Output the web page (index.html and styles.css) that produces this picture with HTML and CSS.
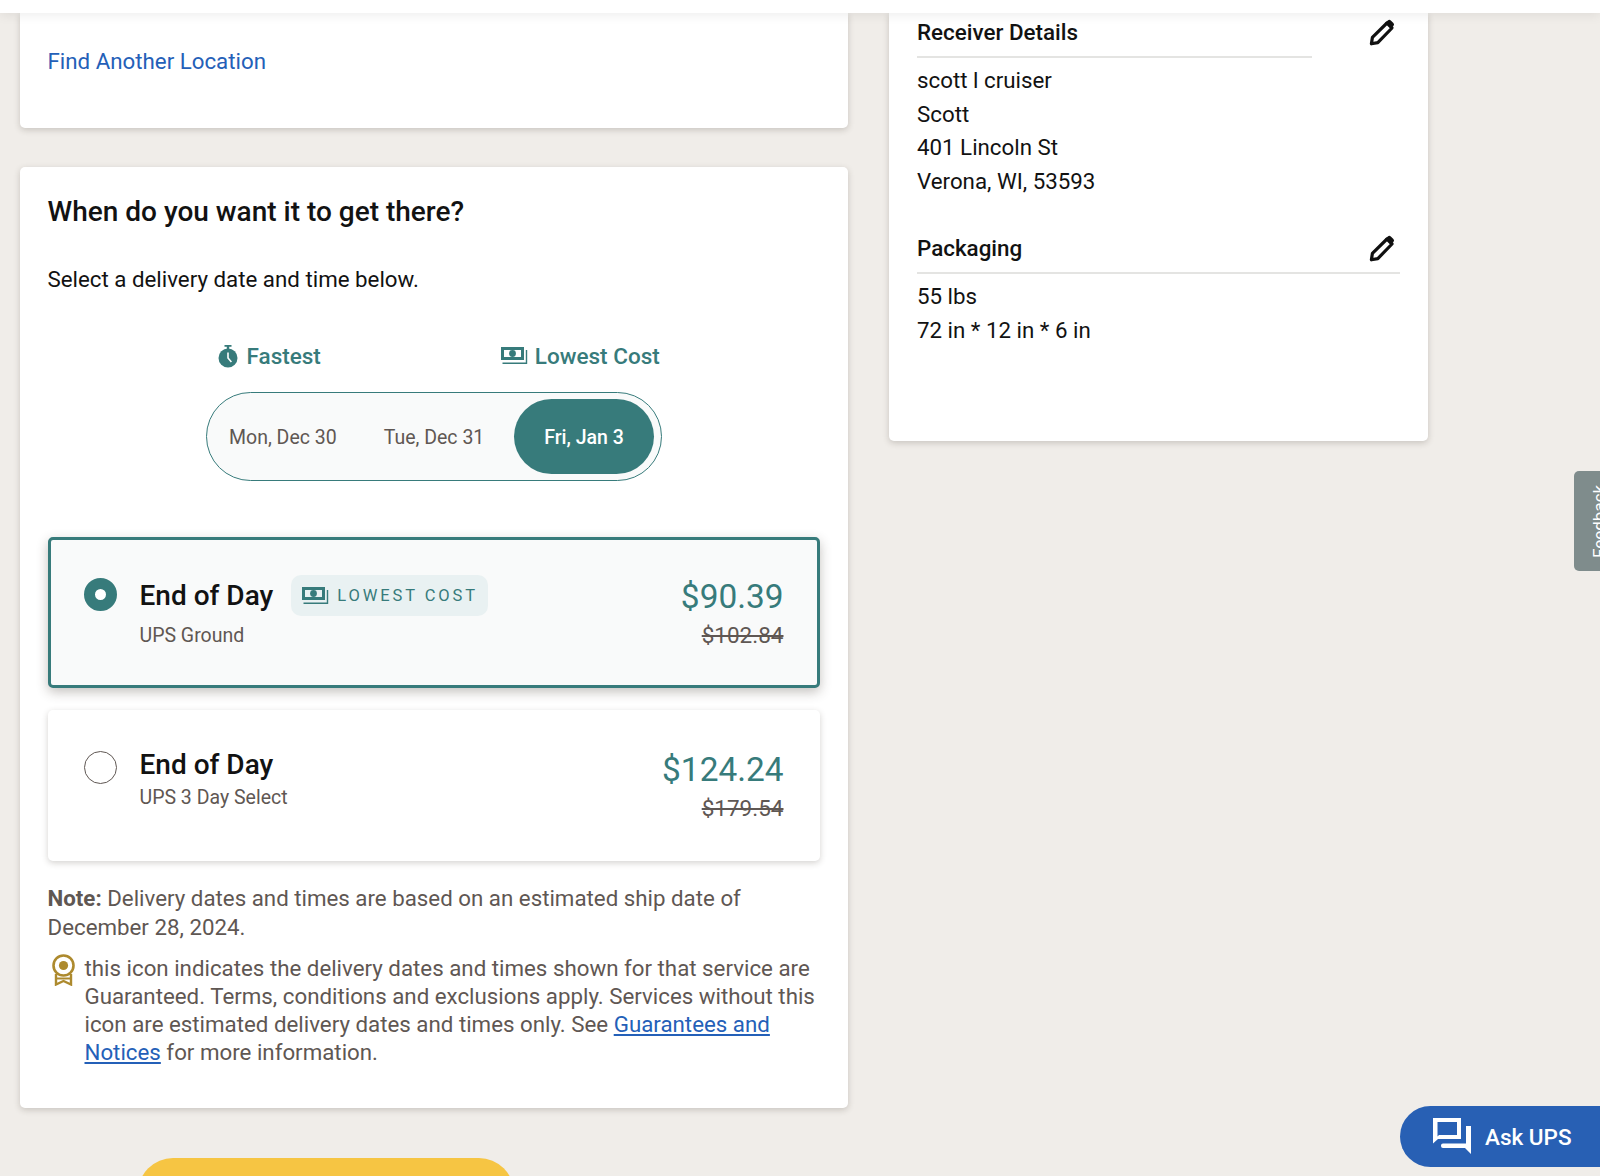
FILE: index.html
```html
<!DOCTYPE html>
<html lang="en">
<head>
<meta charset="utf-8">
<title>Ship</title>
<link rel="stylesheet" href="styles.css">
</head>
<body>
<header class="topbar"></header>
<main class="layout">
  <div class="col-main">
    <section class="card card-location">
      <a class="link-plain" href="#">Find Another Location</a>
    </section>
    <section class="card card-delivery">
      <h2 class="title">When do you want it to get there?</h2>
      <p class="lead">Select a delivery date and time below.</p>
      <div class="hints">
        <span class="hint hint-fast">
          <svg class="ico-watch" viewBox="0 0 20 24"><path d="M6.5 1h7v1.8h-2.3v2.4h-2.4V2.8H6.5z" fill="currentColor"/><circle cx="10" cy="14" r="9.5" fill="currentColor"/><path d="M10 8.5V14l3.4 4" fill="none" stroke="#fff" stroke-width="1.6"/></svg>
          Fastest
        </span>
        <span class="hint hint-low">
          <svg class="ico-money" viewBox="0 0 27 18"><path fill-rule="evenodd" d="M0 0h23v13H0zM3 3v7h17V3z" fill="currentColor"/><circle cx="11.5" cy="6.5" r="3.4" fill="currentColor"/><path d="M1.5 16.3h24V3" fill="none" stroke="currentColor" stroke-width="1.4"/></svg>
          Lowest Cost
        </span>
      </div>
      <div class="segment">
        <span class="seg seg-mon">Mon, Dec 30</span>
        <span class="seg seg-tue">Tue, Dec 31</span>
        <span class="seg seg-active">Fri, Jan 3</span>
      </div>
      <div class="option option-selected">
        <span class="radio radio-on"></span>
        <div class="opt-body">
          <div class="opt-head">
            <span class="opt-title">End of Day</span>
            <span class="badge">
              <svg class="ico-money-sm" viewBox="0 0 27 18"><path fill-rule="evenodd" d="M0 0h23v13H0zM3 3v7h17V3z" fill="currentColor"/><circle cx="11.5" cy="6.5" r="3.4" fill="currentColor"/><path d="M1.5 16.3h24V3" fill="none" stroke="currentColor" stroke-width="1.4"/></svg>
              LOWEST COST
            </span>
          </div>
          <div class="opt-sub opt-sub-wide">UPS Ground</div>
        </div>
        <div class="opt-price">
          <div class="price">$90.39</div>
          <div class="was">$102.84</div>
        </div>
      </div>
      <div class="option">
        <span class="radio"></span>
        <div class="opt-body">
          <div class="opt-head">
            <span class="opt-title">End of Day</span>
          </div>
          <div class="opt-sub">UPS 3 Day Select</div>
        </div>
        <div class="opt-price">
          <div class="price">$124.24</div>
          <div class="was">$179.54</div>
        </div>
      </div>
      <p class="note"><strong>Note:</strong> Delivery dates and times are based on an estimated ship date of December 28, 2024.</p>
      <div class="guarantee">
        <svg class="ico-medal" viewBox="0 0 24 32"><circle cx="12" cy="11.5" r="10" fill="none" stroke="#ad8a2e" stroke-width="2.6"/><circle cx="12" cy="11.5" r="4.6" fill="#ad8a2e"/><path d="M4.5 20v10.5L12 27l7.5 3.5V20" fill="none" stroke="#ad8a2e" stroke-width="2.4"/><path d="M5 24.5h14" stroke="#ad8a2e" stroke-width="2"/></svg>
        <p class="guarantee-text">this icon indicates the delivery dates and times shown for that service are Guaranteed. Terms, conditions and exclusions apply. Services without this icon are estimated delivery dates and times only. See <a class="link" href="#">Guarantees and Notices</a> for more information.</p>
      </div>
    </section>
    <button class="cta" type="button"></button>
  </div>
  <aside class="col-side">
    <section class="card card-summary">
      <div class="sum-head sum-head-first">
        <h3 class="sum-title sum-title-short">Receiver Details</h3>
        <svg class="ico-pencil" viewBox="0 0 26 27"><path d="M2.4 24.8l1-6.4L18 4l5 5L8.8 23.6z" fill="none" stroke="#111" stroke-width="3.2" stroke-linejoin="round"/><path d="M16.2 3.8l2.6-2.4a2.2 2.2 0 0 1 3 0l2.6 2.6a2.2 2.2 0 0 1 0 3l-2.4 2.6z" fill="#111"/></svg>
      </div>
      <div class="sum-lines">scott l cruiser<br>Scott<br>401 Lincoln St<br>Verona, WI, 53593</div>
      <div class="sum-head sum-head-line">
        <h3 class="sum-title">Packaging</h3>
        <svg class="ico-pencil" viewBox="0 0 26 27"><path d="M2.4 24.8l1-6.4L18 4l5 5L8.8 23.6z" fill="none" stroke="#111" stroke-width="3.2" stroke-linejoin="round"/><path d="M16.2 3.8l2.6-2.4a2.2 2.2 0 0 1 3 0l2.6 2.6a2.2 2.2 0 0 1 0 3l-2.4 2.6z" fill="#111"/></svg>
      </div>
      <div class="sum-lines sum-lines-last">55 lbs<br>72 in * 12 in * 6 in</div>
    </section>
  </aside>
</main>
<div class="feedback"><span class="feedback-text">Feedback</span></div>
<button class="ask" type="button">
  <svg class="ico-chat" viewBox="0 0 40 39"><path fill-rule="evenodd" d="M1 1h28v21H6l-5 4.5zM5.5 5v14.5L7 18h18V5z" fill="#fff"/><path d="M34 9h5v28l-6-6H11a2 2 0 0 1-2-2v-.5a2 2 0 0 1 2-2h23z" fill="#fff"/></svg>
  Ask UPS
</button>
</body>
</html>
```
FILE: styles.css
```css
* { box-sizing: border-box; }
html, body { margin: 0; height: 100%; }
body {
  height: 1176px;
  overflow: hidden;
  background: #f0ede9;
  font-family: Roboto, "Liberation Sans", sans-serif;
  font-size: 22.3px;
  color: #121212;
}
.topbar {
  position: relative;
  z-index: 5;
  height: 13px;
  background: #fff;
  box-shadow: 0 2px 12px rgba(0, 0, 0, .08);
}
.layout {
  display: grid;
  grid-template-columns: 828px 539px;
  column-gap: 41.5px;
  padding-left: 19.5px;
  align-items: start;
}
.card {
  background: #fff;
  border-radius: 5px;
  box-shadow: 0 2px 6px rgba(60, 50, 40, .22);
}
.card-location {
  height: 115px;
  padding: 33px 28px 0;
  border-radius: 0 0 5px 5px;
}
.link-plain { display: block; line-height: 30px; color: #2460b8; text-decoration: none; }
.card-delivery { margin-top: 39px; padding: 27px 28px 42px; }
.title { margin: 0; font-size: 28px; line-height: 36px; font-weight: 500; }
.lead { margin: 34px 0 0; line-height: 30px; }
.hints {
  display: flex;
  margin-top: 47px;
  height: 30px;
  color: #377b7b;
  font-weight: 500;
  font-size: 22.5px;
  line-height: 30px;
}
.hint { display: flex; align-items: center; }
.hint-fast { margin-left: 170px; gap: 9px; }
.hint-low { margin-left: 180px; gap: 7px; }
.ico-watch { width: 20px; height: 24px; }
.ico-money { width: 27px; height: 18px; }
.segment {
  display: flex;
  align-items: center;
  width: 456px;
  height: 89px;
  margin: 21px 0 0 158.5px;
  padding: 0 7px 0 22px;
  border: 1.5px solid #377b7b;
  border-radius: 45px;
  background: #f9fafa;
  font-size: 19.5px;
  color: #5f5753;
}
.seg { line-height: 28px; padding-top: 2px; }
.seg-tue { margin-left: 47px; }
.seg-active {
  display: flex;
  align-items: center;
  justify-content: center;
  width: 140px;
  height: 75px;
  margin-left: auto;
  border-radius: 38px;
  background: #377b7b;
  color: #fff;
  font-weight: 500;
}
.option {
  display: flex;
  align-items: flex-start;
  height: 151px;
  margin-top: 22px;
  padding: 35px 33px;
  border: 3px solid transparent;
  border-radius: 5px;
  background: #fff;
  box-shadow: 0 2px 6px rgba(60, 50, 40, .22);
}
.option-selected {
  margin-top: 56px;
  border-color: #377b7b;
  background: #f9fafa;
  box-shadow: 0 4px 12px rgba(60, 50, 40, .3);
}
.radio {
  flex: none;
  width: 33px;
  height: 33px;
  margin-top: 3px;
  border: 1.5px solid #5f5753;
  border-radius: 50%;
  background: #fff;
}
.radio-on { border: 11px solid #377b7b; }
.opt-body { flex: 1; margin-left: 23px; }
.opt-head { display: flex; align-items: center; gap: 18px; }
.opt-title { font-size: 28px; line-height: 34px; font-weight: 500; }
.badge {
  display: flex;
  align-items: center;
  gap: 8px;
  height: 41px;
  padding: 0 10px 0 11px;
  border-radius: 10px;
  background: #e9f1f2;
  color: #377b7b;
  font-size: 16.5px;
  letter-spacing: 2.9px;
}
.ico-money-sm { width: 27px; height: 18px; }
.opt-sub { margin-top: 3px; font-size: 19.5px; line-height: 26px; color: #5f5753; }
.opt-sub-wide { margin-top: 7px; }
.opt-price { text-align: right; }
.price { font-size: 33.4px; line-height: 44px; color: #377b7b; }
.was {
  margin-top: 1px;
  font-size: 22.5px;
  line-height: 30px;
  color: #5f5753;
  text-decoration: line-through;
}
.note { margin: 23px 0 0; line-height: 29px; color: #5f5753; }
.guarantee { display: flex; margin-top: 12px; gap: 9px; }
.ico-medal { flex: none; width: 25px; height: 32px; margin-left: 3px; }
.guarantee-text { margin: 0; line-height: 28px; color: #5f5753; }
.link { color: #2460b8; }
.cta {
  display: block;
  width: 376px;
  height: 70px;
  margin: 50px 0 0 118.5px;
  border: 0;
  border-radius: 35px;
  background: #f6c543;
}
.card-summary { border-radius: 0 0 5px 5px; padding: 4px 28px 94px; }
.sum-head { display: flex; justify-content: space-between; align-items: flex-start; }
.sum-title { margin: 0; font-size: 22.4px; line-height: 30px; font-weight: 500; }
.sum-title-short { width: 395px; padding-bottom: 9px; border-bottom: 2px solid #e4e4e2; }
.sum-head-line { margin-top: 34px; padding-bottom: 9px; border-bottom: 2px solid #e4e4e2; }
.ico-pencil { width: 26px; height: 27px; margin: 2px 5px 0 0; }
.sum-lines { margin-top: 6px; line-height: 33.7px; }
.sum-lines-last { margin-top: 6px; }
.feedback {
  position: fixed;
  right: 0;
  top: 471px;
  width: 26.5px;
  height: 100px;
  overflow: hidden;
  border-radius: 5px 0 0 5px;
  background: #7f8c8c;
}
.feedback-text {
  position: absolute;
  left: 13.3px;
  top: 87px;
  transform: rotate(-90deg);
  transform-origin: 0 0;
  font-size: 17px;
  line-height: 24px;
  color: #fff;
}
.ask {
  position: fixed;
  right: 0;
  top: 1106px;
  display: flex;
  align-items: center;
  gap: 13px;
  width: 200px;
  height: 61px;
  padding: 0 0 0 32px;
  border: 0;
  border-radius: 31px 0 0 31px;
  background: #2860b4;
  color: #fff;
  font-family: inherit;
  font-size: 22.5px;
  font-weight: 500;
}
.ico-chat { width: 40px; height: 39px; }
```
